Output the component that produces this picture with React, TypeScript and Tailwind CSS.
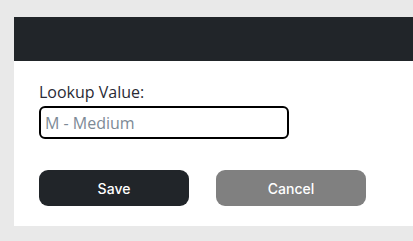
export default function App() {
  return (
    <div className="min-h-[241px] bg-[#e9e9e9] pt-[17px] pl-[14px]">
      {/* Card */}
      <div className="bg-white">
        <div className="h-[44px] bg-[#212529]" />
        <div className="px-[25px] pt-[19px] pb-[20px]">
          <label
            className="block text-[16px] leading-[24px] text-[#2a2a35]"
            style={{ fontFamily: '"Open Sans", sans-serif' }}
          >
            Lookup Value:
          </label>
          <input
            type="text"
            placeholder="M - Medium"
            className="mt-[2px] block h-[33px] w-[250px] rounded-[6px] border-2 border-black px-[4px] text-[16px] text-[#212529] placeholder:text-[#7d8a96] outline-none"
            style={{ fontFamily: '"Open Sans", sans-serif' }}
          />
          <div className="mt-[31px] flex gap-[27px]">
            <button
              className="h-[36px] w-[150px] rounded-[9px] bg-[#212529] text-[14px] font-medium text-white"
              style={{ fontFamily: 'Inter, sans-serif' }}
            >
              Save
            </button>
            <button
              className="h-[36px] w-[150px] rounded-[9px] bg-[#808080] text-[14px] font-medium text-white"
              style={{ fontFamily: 'Inter, sans-serif' }}
            >
              Cancel
            </button>
          </div>
        </div>
      </div>
    </div>
  );
}
